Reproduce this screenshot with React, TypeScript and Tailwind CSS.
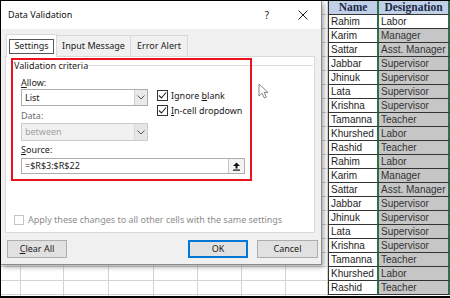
import React from "react";

const names = ["Rahim", "Karim", "Sattar", "Jabbar", "Jhinuk", "Lata", "Krishna", "Tamanna", "Khurshed", "Rashid"];
const jobs = ["Labor", "Manager", "Asst. Manager", "Supervisor", "Supervisor", "Supervisor", "Supervisor", "Teacher", "Labor", "Teacher"];
const people = [...names, ...names].map((name, i) => ({ name, job: jobs[i % 10] }));

const gridCols = [20, 43, 45, 45, 44, 44, 44, 42];

function Chevron() {
    return (
        <svg width="8" height="5" viewBox="0 0 8 5" fill="none">
            <path d="M0.5 0.5 L4 4 L7.5 0.5" stroke="#555" strokeWidth="1" />
        </svg>
    );
}

function Check() {
    return (
        <span className="w-[11px] h-[11px] border border-[#333] bg-white flex items-center justify-center">
            <svg width="9" height="9" viewBox="0 0 9 9" fill="none">
                <path d="M1 4.5 L3.5 7 L8 1.5" stroke="#222" strokeWidth="1.1" />
            </svg>
        </span>
    );
}

function Dialog() {
    return (
        <div className="absolute left-0 top-0 w-[321px] h-[264px] bg-[#f0f0f0] border-r border-b border-[#8a8a8a] shadow-[2px_2px_5px_rgba(0,0,0,0.35)] flex flex-col font-['Noto_Sans',sans-serif] text-[9px] text-[#1a1a1a]">
            {/* Title bar */}
            <div className="h-[28px] bg-white flex items-center pl-[7px] shrink-0">
                <span className="text-[#111]">Data Validation</span>
                <div className="ml-auto flex items-center pr-[13px]">
                    <span className="w-[10px] text-center text-[10px]">?</span>
                    <span className="w-[10px] ml-[26px] flex justify-center">
                        <svg width="10" height="10" viewBox="0 0 10 10" fill="none">
                            <path d="M0.5 0.5 L9.5 9.5 M9.5 0.5 L0.5 9.5" stroke="#222" strokeWidth="1" />
                        </svg>
                    </span>
                </div>
            </div>

            {/* Tabs */}
            <div className="h-[27px] flex items-end pl-[5px] shrink-0">
                <div className="w-[51px] h-[23px] bg-white border-t border-l border-r border-[#d9d9d9] flex items-center justify-center -mb-px relative z-10">
                    <span className="h-[15px] px-[4px] border border-[#555] flex items-center">Settings</span>
                </div>
                <div className="w-[74px] h-[21px] border-t border-r border-[#d9d9d9] flex items-center justify-center">Input Message</div>
                <div className="w-[57px] h-[21px] border-t border-r border-[#d9d9d9] flex items-center justify-center">Error Alert</div>
            </div>

            {/* Panel */}
            <div className="ml-[4px] w-[310px] h-[177px] bg-white border border-[#d9d9d9] relative shrink-0 flex flex-col">
                <div className="absolute top-[8px] left-[82px] right-[1px] h-px bg-[#dcdcdc]"></div>

                <div className="ml-[5px] mt-[1px] w-[241px] h-[123px] border-2 border-[#e8131b] flex flex-col relative">
                    <span className="pl-[1px] h-[11px] leading-[11px]">Validation criteria</span>

                    <div className="flex mt-[6px] pl-[8px]">
                        <div className="w-[127px] flex flex-col">
                            <span className="h-[12px] leading-[12px]"><u>A</u>llow:</span>
                            <div className="h-[17px] border border-[#adadad] bg-white flex">
                                <span className="flex-1 pl-[3px] flex items-center">List</span>
                                <span className="w-[13px] border-l border-[#d0d0d0] bg-[#eaeaea] flex items-center justify-center"><Chevron /></span>
                            </div>
                            <span className="mt-[4px] h-[12px] leading-[12px] text-[#6d6d6d]">Data:</span>
                            <div className="mt-[1px] h-[18px] border border-[#cccccc] bg-[#f0f0f0] flex">
                                <span className="flex-1 pl-[3px] flex items-center text-[#a3a3a3]">between</span>
                                <span className="w-[13px] border-l border-[#d6d6d6] bg-[#e6e6e6] flex items-center justify-center"><Chevron /></span>
                            </div>
                        </div>
                        <div className="ml-[9px] pt-[13px] flex flex-col">
                            <div className="flex items-center h-[11px]">
                                <Check />
                                <span className="ml-[3px]">Ignore <u>b</u>lank</span>
                            </div>
                            <div className="flex items-center h-[11px] mt-[4px]">
                                <Check />
                                <span className="ml-[3px]"><u>I</u>n-cell dropdown</span>
                            </div>
                        </div>
                    </div>

                    <span className="mt-[3px] pl-[8px] h-[12px] leading-[12px]"><u>S</u>ource:</span>
                    <div className="mt-[2px] ml-[8px] w-[224px] h-[16px] border border-[#adadad] bg-white flex">
                        <span className="flex-1 pl-[3px] flex items-center">=$R$3:$R$22</span>
                        <span className="w-[16px] border-l border-[#c8c8c8] bg-[#f3f3f3] flex items-center justify-center">
                            <svg width="9" height="9" viewBox="0 0 9 9" fill="#111">
                                <path d="M4.5 0.5 L8 4 L5.5 4 L5.5 6.5 L3.5 6.5 L3.5 4 L1 4 Z" />
                                <rect x="1" y="7.5" width="7" height="1.2" />
                            </svg>
                        </span>
                    </div>
                </div>

                <div className="mt-[32px] ml-[8px] flex items-center">
                    <span className="w-[10px] h-[10px] border border-[#c5c5c5] bg-white"></span>
                    <span className="ml-[4px] text-[#8d8d8d]">Apply these changes to all other cells with the same settings</span>
                </div>
            </div>

            {/* Buttons */}
            <div className="mt-[7px] flex h-[18px] shrink-0">
                <div className="ml-[6px] w-[60px] bg-[#e1e1e1] border border-[#adadad] flex items-center justify-center"><span><u>C</u>lear All</span></div>
                <div className="ml-[121px] w-[60px] bg-[#e1e1e1] border-2 border-[#0078d7] flex items-center justify-center">OK</div>
                <div className="ml-[9px] w-[61px] bg-[#e1e1e1] border border-[#adadad] flex items-center justify-center">Cancel</div>
            </div>
        </div>
    );
}

export default function App() {
    return (
        <div className="w-[450px] h-[298px] border-l border-t border-b-2 border-black flex overflow-hidden bg-white">
            {/* Sheet behind the dialog */}
            <div className="w-[327px] h-full relative overflow-hidden shrink-0">
                <div className="flex flex-col">
                    {Array.from({ length: 22 }).map((_, r) => (
                        <div key={r} className="flex h-[14px] shrink-0">
                            {gridCols.map((w, c) => (
                                <div key={c} className="h-full border-r border-b border-[#d4d4d4] shrink-0" style={{ width: w }}></div>
                            ))}
                        </div>
                    ))}
                </div>

                <Dialog />

                {/* Mouse pointer */}
                <svg className="absolute left-[257px] top-[82px]" width="11" height="16" viewBox="0 0 11 16" fill="white">
                    <path d="M1 1 L1 13 L4 10.2 L6.3 15 L8.3 14.1 L6.1 9.4 L10 9.4 Z" stroke="#777" strokeWidth="0.9" />
                </svg>
            </div>

            {/* Data table */}
            <div className="w-[122px] flex flex-col font-['Liberation_Sans',Arial,sans-serif] text-[10px] shrink-0">
                <div className="flex h-[14px] shrink-0 bg-[#c0d0e6] font-['Liberation_Serif',serif] font-bold text-[11.5px] text-[#1b2a47]">
                    <div className="w-[49px] border-l border-b border-[#333] flex items-center justify-center">Name</div>
                    <div className="w-[73px] border-l-2 border-r-2 border-b border-l-[#2e6e4a] border-r-[#2e6e4a] border-b-[#333] flex items-center justify-center">Designation</div>
                </div>
                {people.map((p, i) => (
                    <div key={i} className="flex h-[14px] shrink-0">
                        <div className="w-[49px] border-l border-b border-[#333] pl-[2px] flex items-center text-[#1e1e1e]">{p.name}</div>
                        <div
                            className={
                                i === 0
                                    ? "w-[73px] border-l-2 border-r-2 border-b border-l-[#2e6e4a] border-r-[#2e6e4a] border-b-[#333] pl-[2px] flex items-center bg-white text-[#1e1e1e]"
                                    : "w-[73px] border-l-2 border-r-2 border-b border-l-[#2e6e4a] border-r-[#2e6e4a] border-b-[#333] pl-[2px] flex items-center bg-[#c6c6c6] text-[#333]"
                            }
                        >
                            {p.job}
                        </div>
                    </div>
                ))}
            </div>
        </div>
    );
}
